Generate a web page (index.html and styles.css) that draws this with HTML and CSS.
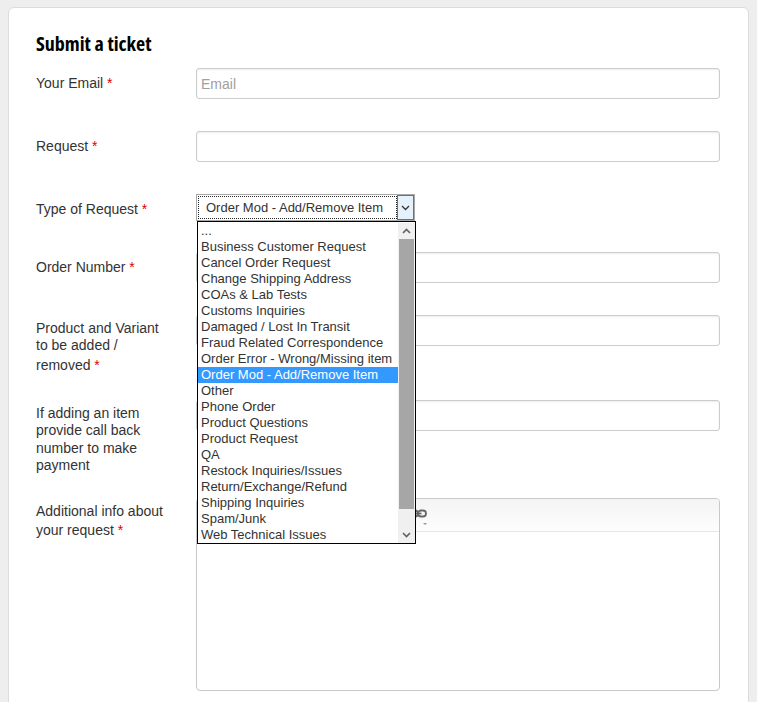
FILE: index.html
```html
<!DOCTYPE html>
<html>
<head>
<meta charset="utf-8">
<title>Submit a ticket</title>
<link rel="stylesheet" href="styles.css">
</head>
<body>
<div class="card">
  <h1 class="title">Submit a ticket</h1>

  <div class="row">
    <label class="label">Your Email <span class="req">*</span></label>
    <div class="field"><input class="input" type="text" placeholder="Email"></div>
  </div>

  <div class="row">
    <label class="label">Request <span class="req">*</span></label>
    <div class="field"><input class="input" type="text"></div>
  </div>

  <div class="row">
    <label class="label">Type of Request <span class="req">*</span></label>
    <div class="field">
      <div class="select">
        <div class="select-value">Order Mod - Add/Remove Item</div>
        <div class="select-btn">
          <svg width="9" height="6" viewBox="0 0 9 6"><path d="M1 1 L4.5 4.5 L8 1" fill="none" stroke="#333" stroke-width="1.3"/></svg>
        </div>
        <div class="listbox">
          <ul class="options">
            <li class="opt">...</li>
            <li class="opt">Business Customer Request</li>
            <li class="opt">Cancel Order Request</li>
            <li class="opt">Change Shipping Address</li>
            <li class="opt">COAs &amp; Lab Tests</li>
            <li class="opt">Customs Inquiries</li>
            <li class="opt">Damaged / Lost In Transit</li>
            <li class="opt">Fraud Related Correspondence</li>
            <li class="opt">Order Error - Wrong/Missing item</li>
            <li class="opt selected">Order Mod - Add/Remove Item</li>
            <li class="opt">Other</li>
            <li class="opt">Phone Order</li>
            <li class="opt">Product Questions</li>
            <li class="opt">Product Request</li>
            <li class="opt">QA</li>
            <li class="opt">Restock Inquiries/Issues</li>
            <li class="opt">Return/Exchange/Refund</li>
            <li class="opt">Shipping Inquiries</li>
            <li class="opt">Spam/Junk</li>
            <li class="opt">Web Technical Issues</li>
          </ul>
          <div class="scrollbar">
            <div class="sb-arrow">
              <svg width="9" height="6" viewBox="0 0 9 6"><path d="M1 5 L4.5 1.5 L8 5" fill="none" stroke="#606060" stroke-width="1.6"/></svg>
            </div>
            <div class="sb-thumb"></div>
            <div class="sb-track"></div>
            <div class="sb-arrow">
              <svg width="9" height="6" viewBox="0 0 9 6"><path d="M1 1 L4.5 4.5 L8 1" fill="none" stroke="#606060" stroke-width="1.6"/></svg>
            </div>
          </div>
        </div>
      </div>
    </div>
  </div>

  <div class="row">
    <label class="label">Order Number <span class="req">*</span></label>
    <div class="field"><input class="input" type="text"></div>
  </div>

  <div class="row">
    <label class="label">Product and Variant to be added / removed <span class="req">*</span></label>
    <div class="field"><input class="input" type="text"></div>
  </div>

  <div class="row">
    <label class="label">If adding an item provide call back number to make payment</label>
    <div class="field"><input class="input" type="text"></div>
  </div>

  <div class="row">
    <label class="label">Additional info about your request <span class="req">*</span></label>
    <div class="field">
      <div class="editor">
        <div class="toolbar">
          <span class="tb-btn">B</span>
          <span class="tb-btn">I</span>
          <span class="tb-btn">U</span>
          <span class="tb-btn">S</span>
          <span class="tb-btn">≡</span>
          <span class="tb-btn">≡</span>
          <span class="tb-btn">“</span>
          <span class="tb-link">
            <svg width="18" height="14" viewBox="0 0 18 14">
              <rect x="1" y="3.5" width="8" height="6" rx="3" fill="none" stroke="#666" stroke-width="1.8"/>
              <rect x="9" y="3.5" width="8" height="6" rx="3" fill="none" stroke="#666" stroke-width="1.8"/>
              <path d="M5.5 6.5 H12.5" stroke="#666" stroke-width="1.8"/>
            </svg>
            <span class="caret"></span>
          </span>
        </div>
        <div class="editor-body"></div>
      </div>
    </div>
  </div>
</div>
</body>
</html>
```

FILE: styles.css
```css
html, body {
  margin: 0;
  padding: 0;
}
body {
  background: #eeeeee;
  padding: 7px 8px 0 8px;
  font-family: "Liberation Sans", Arial, sans-serif;
  color: #333;
}
.card {
  background: #fff;
  border: 1px solid #dcdcdc;
  border-radius: 6px;
  padding: 0 28px 30px 27px;
}
.title {
  margin: 24px 0 12px 0;
  font-family: "Open Sans", "DejaVu Sans Condensed", sans-serif;
  font-weight: 700;
  font-stretch: 75%;
  font-size: 20px;
  line-height: 24px;
  color: #000;
}
.row {
  display: flex;
  margin-bottom: 25px;
}
.label {
  width: 135px;
  padding: 5px 25px 0 0;
  margin-bottom: -1px;
  flex: none;
  font-size: 14px;
  line-height: 17.25px;
  color: #333;
}
.req {
  color: #e00000;
  line-height: 21.5px;
}
.field {
  flex: 1;
  min-width: 0;
}
.input {
  display: block;
  box-sizing: border-box;
  width: 100%;
  height: 31px;
  margin: 0 0 7px 0;
  padding: 0 4px;
  border: 1px solid #cccccc;
  border-radius: 3px;
  box-shadow: inset 0 1px 2px rgba(0,0,0,0.08);
  font-family: "Liberation Sans", Arial, sans-serif;
  font-size: 14px;
  color: #333;
  background: #fff;
}
.input::placeholder {
  color: #a0a0a0;
}

/* select */
.select {
  position: relative;
  display: flex;
  box-sizing: border-box;
  width: 219px;
  height: 27px;
  margin-bottom: 6px;
  border: 1px solid #a8a8a8;
  background: #fff;
}
.select-value {
  flex: 1;
  margin: 1px 0 1px 1px;
  border: 1px dotted #222;
  padding-left: 7px;
  font-size: 13px;
  line-height: 21px;
  color: #333;
  white-space: nowrap;
}
.select-btn {
  width: 15px;
  flex: none;
  border: 1px solid #3c7fb1;
  background: #e5f1fb;
  display: flex;
  align-items: center;
  justify-content: center;
}
.listbox {
  position: absolute;
  top: 26px;
  left: 0;
  z-index: 10;
  box-sizing: border-box;
  width: 219px;
  border: 1px solid #000;
  padding-top: 1px;
  background: #fff;
  display: flex;
}
.options {
  list-style: none;
  margin: 0;
  padding: 0;
  width: 200px;
  flex: none;
}
.opt {
  height: 16px;
  line-height: 16px;
  padding-left: 3px;
  font-size: 13px;
  color: #333;
  white-space: nowrap;
  overflow: hidden;
}
.opt.selected {
  background: #3399ff;
  color: #fff;
}
.scrollbar {
  width: 17px;
  flex: none;
  background: #f0f0f0;
  display: flex;
  flex-direction: column;
}
.sb-arrow {
  height: 16px;
  display: flex;
  align-items: center;
  justify-content: center;
}
.sb-thumb {
  height: 270px;
  margin: 0 1px 0 1px;
  background: #a6a6a6;
}
.sb-track {
  flex: 1;
}

/* editor */
.editor {
  box-sizing: border-box;
  height: 193px;
  border: 1px solid #c8c8c8;
  border-radius: 4px;
  overflow: hidden;
  background: #fff;
}
.toolbar {
  height: 32px;
  border-bottom: 1px solid #e6e6e6;
  background: linear-gradient(#f4f4f4, #fdfdfd);
  display: flex;
  align-items: center;
  padding-left: 20px;
}
.tb-btn {
  width: 26px;
  text-align: center;
  font-size: 13px;
  color: #555;
}
.tb-link {
  position: relative;
  display: flex;
  margin-left: 10px;
  margin-top: -2px;
}
.caret {
  position: absolute;
  left: 14px;
  top: 16px;
  width: 0;
  height: 0;
  border-left: 2px solid transparent;
  border-right: 2px solid transparent;
  border-top: 2px solid #999;
}
.editor-body {
  height: 150px;
}
```
